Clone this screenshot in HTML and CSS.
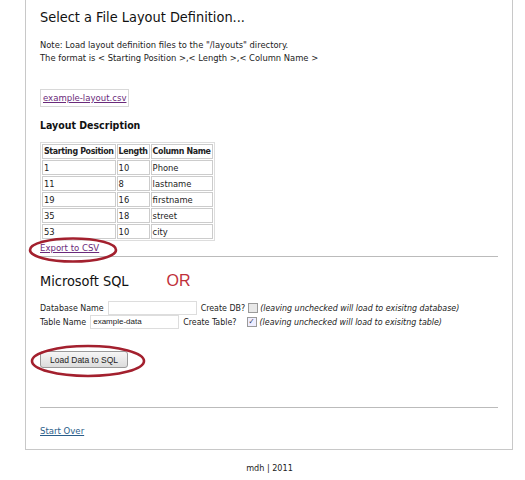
FILE: index.html
```html
<!DOCTYPE html>
<html>
<head>
<meta charset="utf-8">
<link rel="stylesheet" href="styles.css">
</head>
<body>
<div class="page">
  <h1 class="title">Select a File Layout Definition...</h1>
  <p class="note">Note: Load layout definition files to the "/layouts" directory.<br>The format is &lt; Starting Position &gt;,&lt; Length &gt;,&lt; Column Name &gt;</p>
  <div class="filebox"><a href="#" class="filelink">example-layout.csv</a></div>
  <h2 class="subtitle">Layout Description</h2>
  <table class="layout">
    <tr><th>Starting Position</th><th>Length</th><th>Column Name</th></tr>
    <tr><td>1</td><td>10</td><td>Phone</td></tr>
    <tr><td>11</td><td>8</td><td>lastname</td></tr>
    <tr><td>19</td><td>16</td><td>firstname</td></tr>
    <tr><td>35</td><td>18</td><td>street</td></tr>
    <tr><td>53</td><td>10</td><td>city</td></tr>
  </table>
  <a href="#" class="export">Export to CSV</a>
  <hr class="rule rule-top">
  <div class="sqlhead"><span class="sqltitle">Microsoft SQL</span><span class="or">OR</span></div>
  <div class="formrow first"><span>Database Name</span><span class="input"></span><span>Create DB?</span><span class="cb"></span><em>(leaving unchecked will load to exisitng database)</em></div>
  <div class="formrow"><span>Table Name</span><span class="input">example-data</span><span>Create Table?</span><span class="cb checked">✓</span><em>(leaving unchecked will load to exisitng table)</em></div>
  <button class="btn">Load Data to SQL</button>
  <hr class="rule rule-bottom">
  <a href="#" class="startover">Start Over</a>
  <svg class="ring ring-export" width="90" height="28" viewBox="0 0 90 28"><ellipse cx="45" cy="14" rx="43" ry="11.5" fill="none" stroke="#a3202e" stroke-width="2.6"/></svg>
  <svg class="ring ring-btn" width="116" height="34" viewBox="0 0 116 34"><ellipse cx="58" cy="17" rx="56" ry="15" fill="none" stroke="#a3202e" stroke-width="2.6"/></svg>
</div>
<div class="footer">mdh | 2011</div>
</body>
</html>
```
FILE: styles.css
```css
html, body {
  margin: 0;
  padding: 0;
  background: #fff;
}
body {
  font-family: "DejaVu Sans Condensed", "DejaVu Sans", Verdana, sans-serif;
  font-stretch: condensed;
  color: #222;
  font-size: 9.5px;
}
.page {
  position: relative;
  margin-left: 25px;
  width: 458px;
  padding: 6px 14px 12px 14px;
  border: 1px solid #c8c8c8;
  border-top: none;
}
.title {
  margin: 0;
  font-size: 14.4px;
  font-weight: normal;
  color: #111;
  line-height: 22px;
}
.note {
  margin: 10px 0 0;
  font-size: 9.3px;
  line-height: 13px;
  color: #222;
}
.filebox {
  display: inline-block;
  margin-top: 25px;
  border: 1px solid #d8d8d8;
  padding: 1px 2px;
  line-height: 14px;
}
.filelink {
  color: #6a2a7a;
  font-size: 9.5px;
}
.subtitle {
  margin: 11px 0 0;
  font-size: 10.5px;
  font-weight: bold;
  color: #111;
  line-height: 14px;
}
.layout {
  margin-top: 10px;
  border-collapse: separate;
  border-spacing: 1px;
  border: 1px solid #ddd;
  font-size: 9.3px;
}
.layout th, .layout td {
  border: 1px solid #ccc;
  padding: 0 1px;
  height: 13px;
  line-height: 13px;
  text-align: left;
}
.layout th {
  font-weight: bold;
  font-size: 8.8px;
  letter-spacing: -0.35px;
}
.export {
  display: inline-block;
  margin-top: 0;
  color: #6a2a7a;
  font-size: 9.5px;
  line-height: 13px;
}
.rule {
  border: none;
  border-top: 1px solid #bbb;
  margin: 0;
}
.rule-top { margin-top: 2px; }
.sqlhead {
  margin-top: 13px;
  display: flex;
  align-items: baseline;
  line-height: 22px;
}
.sqltitle {
  font-size: 14.4px;
  color: #111;
}
.or {
  margin-left: 38px;
  font-size: 16px;
  color: #c0303a;
  font-family: "Liberation Sans", Arial, sans-serif;
  font-stretch: normal;
}
.formrow {
  display: flex;
  align-items: center;
  white-space: nowrap;
  font-size: 8.8px;
  line-height: 13px;
  height: 14px;
  gap: 2px;
}
.formrow.first { margin-top: 9px; }
.formrow em {
  font-style: italic;
}
.input {
  display: inline-block;
  width: 89px;
  height: 14px;
  margin: 0 2px;
  border: 1px solid #ddd;
  font-family: "Liberation Sans", Arial, sans-serif;
  font-stretch: normal;
  font-size: 8px;
  line-height: 12px;
  padding-left: 2px;
  box-sizing: border-box;
}
.cb {
  display: inline-block;
  width: 8px;
  height: 8px;
  border: 1px solid #9a9a9a;
  background: #e8e8e8;
  font-size: 8px;
  line-height: 8px;
  text-align: center;
  color: #335;
  margin-left: 1px;
}
.cb.checked { background: #eef; margin-left: 8px; margin-right: 1px; }
.btn {
  display: block;
  margin-top: 22px;
  width: 88px;
  height: 17px;
  padding: 0;
  border: 1px solid #9a9a9a;
  border-radius: 3px;
  background: linear-gradient(#f6f6f6, #dcdcdc);
  font-family: "Liberation Sans", Arial, sans-serif;
  font-stretch: normal;
  font-size: 8.5px;
  color: #222;
}
.rule-bottom { margin-top: 39px; }
.startover {
  display: inline-block;
  margin-top: 16px;
  color: #2a5d8a;
  font-size: 9.5px;
  line-height: 13px;
}
.ring {
  position: absolute;
}
.ring-export { left: 2px; top: 236px; }
.ring-btn { left: 4px; top: 344px; }
.footer {
  text-align: center;
  font-size: 9px;
  margin-top: 13px;
  padding-left: 14px;
  color: #222;
}
```
